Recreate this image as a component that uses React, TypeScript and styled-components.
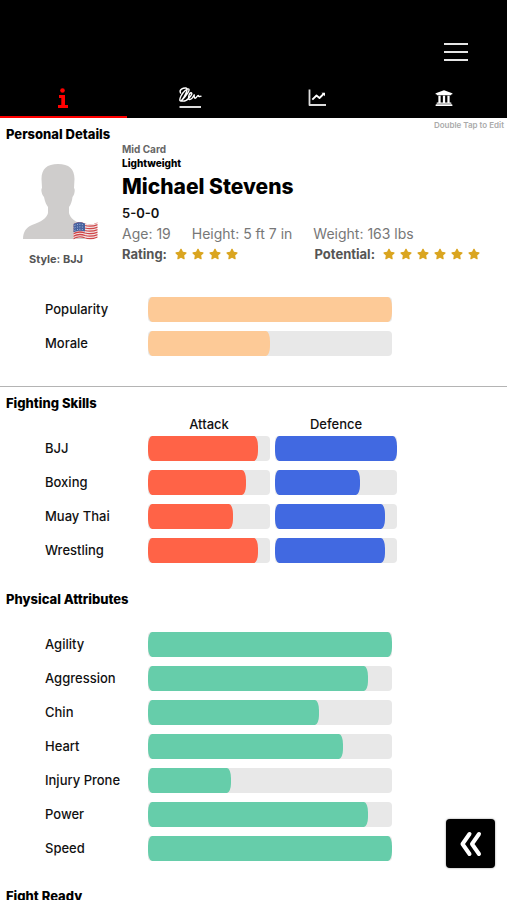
import React from "react";
import styled, { createGlobalStyle } from "styled-components";
import { FaStar, FaUniversity } from "react-icons/fa";

const GlobalStyle = createGlobalStyle`
  * { box-sizing: border-box; }
  html, body { margin: 0; background: #fff; }
  body { font-family: Inter, "Liberation Sans", sans-serif; color: #111; }
  button { font: inherit; border: 0; padding: 0; background: none; cursor: pointer; }
`;

const Screen = styled.div`
  height: 100vh;
  display: flex;
  flex-direction: column;
  overflow: hidden;
`;

const Header = styled.header`
  flex: none;
  background: #000;
  color: #fff;
  padding-top: 24px;
`;

const TopBar = styled.div`
  height: 56px;
  display: flex;
  justify-content: flex-end;
  align-items: center;
  padding-right: 39px;
`;

const MenuButton = styled.button`
  display: flex;
  color: #e6e6e6;
`;

const Tabs = styled.nav`
  display: grid;
  grid-template-columns: repeat(4, 1fr);
`;

const Tab = styled.button<{ $active?: boolean }>`
  height: 38px;
  display: flex;
  align-items: center;
  justify-content: center;
  color: ${(p) => (p.$active ? "#f00" : "#fff")};
  border-bottom: 2px solid ${(p) => (p.$active ? "#f00" : "#000")};
`;

const Content = styled.main`
  flex: 1;
  min-height: 0;
  overflow-y: auto;
  scrollbar-width: none;
`;

const Section = styled.section<{ $space: number }>`
  padding-top: ${(p) => p.$space}px;
`;

const PersonalSection = styled.section`
  padding-bottom: 26px;
  border-bottom: 1px solid #b4b4b4;
`;

const SectionTop = styled.div`
  display: flex;
  justify-content: space-between;
  align-items: flex-start;
  padding: 2px 3px 0 0;
`;

const Heading = styled.h2`
  margin: 0;
  padding-left: 6px;
  font-size: 13px;
  line-height: 15px;
  font-weight: 800;
  color: #000;
`;

const PersonalHeading = styled(Heading)`
  margin-top: 7px;
`;

const Hint = styled.span`
  font-size: 8px;
  line-height: 10px;
  font-weight: 600;
  color: #aaa;
`;

const Profile = styled.div`
  display: grid;
  grid-template-columns: 112px minmax(0, 1fr);
  column-gap: 10px;
`;

const Portrait = styled.div`
  display: flex;
  flex-direction: column;
  align-items: center;
  padding-top: 22px;
`;

const Avatar = styled.div`
  position: relative;
  display: flex;
  padding-left: 4px;
`;

const FlagBadge = styled.span`
  position: absolute;
  right: -5px;
  bottom: -2px;
  display: flex;
`;

const StyleName = styled.div`
  margin-top: 12px;
  font-size: 11px;
  line-height: 16px;
  font-weight: 700;
  color: #555;
`;

const Rank = styled.div`
  font-size: 10px;
  line-height: 14px;
  font-weight: 700;
  color: #666;
`;

const Division = styled(Rank)`
  font-weight: 800;
  color: #000;
`;

const Name = styled.h1`
  margin: 0;
  font-size: 21px;
  line-height: 33px;
  font-weight: 800;
  color: #000;
`;

const RecordLine = styled.div`
  font-size: 13px;
  line-height: 20px;
  font-weight: 600;
`;

const Stats = styled.div`
  display: flex;
  gap: 21px;
  font-size: 14px;
  line-height: 22px;
  color: #777;
  white-space: nowrap;
`;

const Ratings = styled.div`
  display: flex;
  justify-content: space-between;
  padding-right: 27px;
`;

const Rating = styled.div`
  display: flex;
  align-items: center;
  gap: 8px;
  font-size: 13px;
  line-height: 18px;
  font-weight: 700;
  color: #555;
`;

const Stars = styled.span`
  display: flex;
  gap: 5px;
  color: #daa520;
`;

const Rows = styled.div<{ $space?: number; $right: number }>`
  padding: ${(p) => p.$space ?? 0}px ${(p) => p.$right}px 0 45px;
`;

const Row = styled.div`
  display: grid;
  grid-template-columns: 103px minmax(0, 1fr);
  align-items: center;
  height: 34px;
  font-size: 13px;
  font-weight: 500;
`;

const ColumnHeads = styled(Row)`
  height: 14px;
  line-height: 14px;
  text-align: center;
`;

const Bars = styled.div`
  grid-column: 2;
  display: grid;
  grid-auto-flow: column;
  grid-auto-columns: minmax(0, 1fr);
  gap: 5px;
`;

const Track = styled.div`
  height: 25px;
  background: #e8e8e8;
  border-radius: 4px;
`;

const Fill = styled.div<{ $color: string }>`
  height: 100%;
  background: ${(p) => p.$color};
  border-radius: 4px / 10px;
`;

const BackButton = styled.button`
  position: fixed;
  right: 12px;
  bottom: 32px;
  width: 49px;
  height: 49px;
  display: flex;
  align-items: center;
  justify-content: center;
  background: #000;
  color: #fff;
  border-radius: 4px;
  box-shadow: 0 0 2px rgba(0, 0, 0, 0.5);
`;

const PEACH = "#fdca97";
const RED = "#ff6347";
const BLUE = "#4169e1";
const GREEN = "#66cdaa";

const mood: [string, number][] = [["Popularity", 100], ["Morale", 50]];
const skills: [string, number, number][] = [
  ["BJJ", 90, 100],
  ["Boxing", 80, 70],
  ["Muay Thai", 70, 90],
  ["Wrestling", 90, 90],
];
const physical: [string, number][] = [
  ["Agility", 100],
  ["Aggression", 90],
  ["Chin", 70],
  ["Heart", 80],
  ["Injury Prone", 34],
  ["Power", 90],
  ["Speed", 100],
];

function Bar({ value, color, label }: { value: number; color: string; label: string }) {
  return (
    <Track role="meter" aria-label={label} aria-valuenow={value} aria-valuemin={0} aria-valuemax={100}>
      <Fill $color={color} style={{ width: `${value}%` }} />
    </Track>
  );
}

function StarRow({ count }: { count: number }) {
  return (
    <Stars role="img" aria-label={`${count} stars`}>
      {Array.from({ length: count }, (_, i) => <FaStar key={i} size={12} />)}
    </Stars>
  );
}

const MenuIcon = () => (
  <svg width="24" height="20" viewBox="0 0 24 20" stroke="currentColor" strokeWidth="2">
    <path d="M0 2h24M0 10h24M0 18h24" />
  </svg>
);

const InfoIcon = () => (
  <svg width="10" height="20" viewBox="0 0 10 20" fill="currentColor">
    <circle cx="4.500" cy="2.500" r="2.300" />
    <path d="M1 7h6v10h3v3H0v-3h3.300v-7H1z" />
  </svg>
);

const SignatureIcon = () => (
  <svg width="24" height="22" viewBox="0 0 24 22" fill="none" stroke="currentColor" strokeLinecap="round" strokeLinejoin="round">
    <path strokeWidth="1.400" d="M2.500 6C.8 2.500 5 .8 8 1C11 1.500 6.500 10.500 3.200 14C1.300 14.500 1.500 12 3 9C5 5 9.500 .8 11 2.200C12 4.200 6 11 3.200 14C6 14.500 9 13.500 11 11C14 8 14.500 6 13 5.800C11 6 9.500 12 11.500 12.600C13.500 12.500 15.500 9.500 16.200 7.800C16.200 9 16 11 17 11.300C18.500 11 19 8.500 20.300 8.500C20.500 9.500 21.500 9.800 23 9.200" />
    <path stroke="#ddd" strokeWidth="2" strokeLinecap="butt" d="M1.500 20h21.500" />
  </svg>
);

const ChartIcon = () => (
  <svg width="18" height="18" viewBox="0 0 18 18" fill="none" stroke="currentColor">
    <path strokeWidth="1.800" stroke="#ddd" strokeLinejoin="round" d="M1.500 .5v15.500H18" />
    <path strokeWidth="1.800" strokeLinejoin="round" d="M4.300 10.700L8.500 6.500L11.500 9L16 4.500" />
    <path fill="currentColor" stroke="none" d="M13.500 3.700H17V7.200z" />
  </svg>
);

const BackIcon = () => (
  <svg width="24" height="26" viewBox="0 0 24 26" fill="none" stroke="currentColor" strokeWidth="4" strokeLinecap="round" strokeLinejoin="round">
    <path d="M10.500 3L3.500 13L10.500 23M20 3L13 13L20 23" />
  </svg>
);

const Silhouette = () => (
  <svg width="70" height="75" viewBox="0 0 70 75" fill="#cfcdcc">
    <path d="M35 0C24 0 18.500 5 18.500 15L19 24C17.500 25.500 19 31 21 33C22 38 23.500 41 25 43V49C24 54 18 58 9 61C3 63.500 0 68 0 75H70C70 68 67 63.500 61 61C52 58 47 54 46 49V43C48 40.500 49 37 49.500 33C51.500 31 52.500 25.500 51 24L51.500 15C51.500 5 46 0 35 0Z" />
  </svg>
);

const Flag = () => (
  <svg width="25" height="20" viewBox="0 0 25 20">
    <defs>
      <clipPath id="flag-shape">
        <path d="M.5 3C5 .5 8 1 12 2.500C17 4 20 3.500 24.500 1.500V16.500C20 19 16 19 12 17.500C8 16 5 16 .5 18.500Z" />
      </clipPath>
    </defs>
    <g clipPath="url(#flag-shape)">
      <path fill="#f3e3e3" d="M0 0h25v20H0z" />
      <g fill="none" stroke="#cf4548" strokeWidth="1.300">
        {[0, 2.5, 5, 7.5, 10, 12.5, 15].map((y) => (
          <path key={y} d={`M0 ${y + 3}C5 ${y} 8 ${y + 0.5} 12 ${y + 2}C17 ${y + 3.5} 20 ${y + 3} 25 ${y + 1}`} />
        ))}
      </g>
      <path fill="#47629f" d="M0 0H12V10.500C8 9.300 5 9.300 0 11.500Z" />
      <g fill="none" stroke="#a9b9dc" strokeDasharray="1 1.500">
        <path d="M1.500 4.500C5 3 8 3 11 4M1.500 7C5 5.500 8 5.500 11 6.500M1.500 9.500C5 8 8 8 11 9" />
      </g>
    </g>
  </svg>
);

export default function App() {
  return (
    <Screen>
      <GlobalStyle />
      <Header>
        <TopBar>
          <MenuButton aria-label="Menu"><MenuIcon /></MenuButton>
        </TopBar>
        <Tabs>
          <Tab $active aria-label="Info" aria-current="page"><InfoIcon /></Tab>
          <Tab aria-label="Contract"><SignatureIcon /></Tab>
          <Tab aria-label="Progress"><ChartIcon /></Tab>
          <Tab aria-label="Hall of fame"><FaUniversity size={18} /></Tab>
        </Tabs>
      </Header>

      <Content>
        <PersonalSection>
          <SectionTop>
            <PersonalHeading>Personal Details</PersonalHeading>
            <Hint>Double Tap to Edit</Hint>
          </SectionTop>
          <Profile>
            <Portrait>
              <Avatar>
                <Silhouette />
                <FlagBadge><Flag /></FlagBadge>
              </Avatar>
              <StyleName>Style: BJJ</StyleName>
            </Portrait>
            <div>
              <Rank>Mid Card</Rank>
              <Division>Lightweight</Division>
              <Name>Michael Stevens</Name>
              <RecordLine>5-0-0</RecordLine>
              <Stats>
                <span>Age: 19</span>
                <span>Height: 5 ft 7 in</span>
                <span>Weight: 163 lbs</span>
              </Stats>
              <Ratings>
                <Rating>Rating: <StarRow count={4} /></Rating>
                <Rating>Potential: <StarRow count={6} /></Rating>
              </Ratings>
            </div>
          </Profile>
          <Rows $space={25} $right={115}>
            {mood.map(([label, value]) => (
              <Row key={label}>
                <span>{label}</span>
                <Bars><Bar label={label} value={value} color={PEACH} /></Bars>
              </Row>
            ))}
          </Rows>
        </PersonalSection>

        <Section $space={9}>
          <Heading>Fighting Skills</Heading>
          <Rows $space={6} $right={110}>
            <ColumnHeads>
              <Bars><span>Attack</span><span>Defence</span></Bars>
            </ColumnHeads>
            {skills.map(([label, attack, defence]) => (
              <Row key={label}>
                <span>{label}</span>
                <Bars>
                  <Bar label={`${label} attack`} value={attack} color={RED} />
                  <Bar label={`${label} defence`} value={defence} color={BLUE} />
                </Bars>
              </Row>
            ))}
          </Rows>
        </Section>

        <Section $space={25}>
          <Heading>Physical Attributes</Heading>
          <Rows $space={20} $right={115}>
            {physical.map(([label, value]) => (
              <Row key={label}>
                <span>{label}</span>
                <Bars><Bar label={label} value={value} color={GREEN} /></Bars>
              </Row>
            ))}
          </Rows>
        </Section>

        <Section $space={24}>
          <Heading>Fight Ready</Heading>
        </Section>
      </Content>

      <BackButton aria-label="Back"><BackIcon /></BackButton>
    </Screen>
  );
}
